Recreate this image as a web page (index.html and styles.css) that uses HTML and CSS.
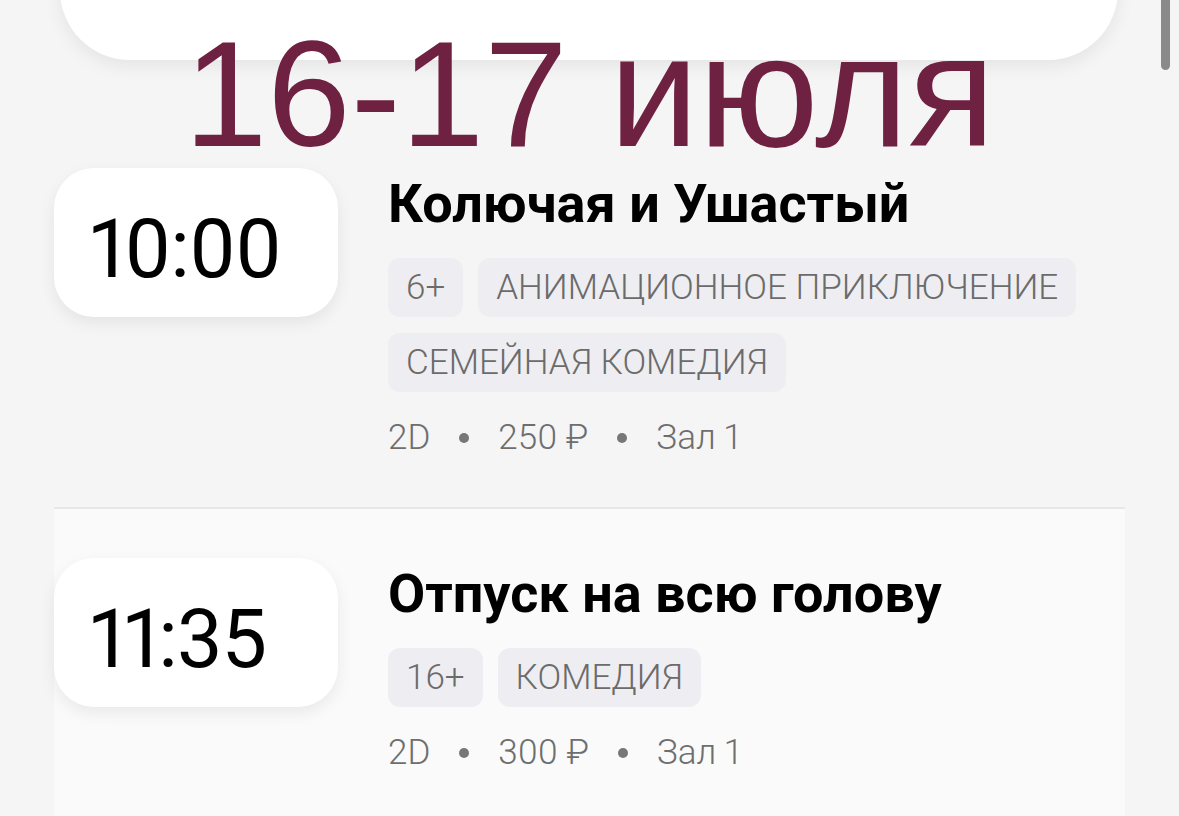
FILE: index.html
```html
<!DOCTYPE html>
<html lang="ru">
<head>
<meta charset="utf-8">
<title>Сеансы</title>
<link rel="stylesheet" href="styles.css">
</head>
<body>
<div class="page">
  <div class="topcard"></div>
  <h1 class="date">16-17 <span class="month">июля</span></h1>
  <div class="sessions">
    <div class="session">
      <div class="time">10:00</div>
      <div class="info">
        <h2 class="title">Колючая и Ушастый</h2>
        <div class="tags">
          <span class="tag">6+</span>
          <span class="tag">АНИМАЦИОННОЕ ПРИКЛЮЧЕНИЕ</span>
          <span class="tag">СЕМЕЙНАЯ КОМЕДИЯ</span>
        </div>
        <div class="meta">
          <span>2D</span><span class="dot"></span><span>250 ₽</span><span class="dot"></span><span>Зал 1</span>
        </div>
      </div>
    </div>
    <div class="session session--alt">
      <div class="time">11:35</div>
      <div class="info">
        <h2 class="title">Отпуск на всю голову</h2>
        <div class="tags">
          <span class="tag">16+</span>
          <span class="tag">КОМЕДИЯ</span>
        </div>
        <div class="meta">
          <span>2D</span><span class="dot"></span><span>300 ₽</span><span class="dot"></span><span>Зал 1</span>
        </div>
      </div>
    </div>
  </div>
</div>
<div class="scrollbar"></div>
</body>
</html>
```
FILE: styles.css
```css
html, body {
  margin: 0;
  padding: 0;
}
body {
  background: #f5f5f5;
  overflow: hidden;
  height: 816px;
  position: relative;
  font-family: Roboto, "Noto Sans", sans-serif;
}
.page {
  padding: 0 54px;
}
.topcard {
  margin: -80px 7px 0 6px;
  height: 140px;
  background: #ffffff;
  border-radius: 70px;
  box-shadow: 0 6px 18px rgba(0, 0, 0, 0.07);
}
.date {
  margin: -40px 0 0;
  text-align: center;
  font-family: "Liberation Sans", Arial, sans-serif;
  font-weight: 400;
  font-size: 150px;
  line-height: 148px;
  color: #6f2141;
}
.month {
  font-size: 160px;
  line-height: 0;
}
.session {
  display: flex;
  align-items: flex-start;
  gap: 50px;
  padding: 0 0 48px;
}
.session--alt {
  border-top: 2px solid #e7e7e7;
  padding-top: 49px;
  background: #fafafa;
}
.time {
  flex: 0 0 auto;
  width: 248px;
  height: 135px;
  padding: 14px 0 0 36px;
  background: #ffffff;
  border-radius: 40px;
  box-shadow: 0 6px 16px rgba(0, 0, 0, 0.07);
  font-size: 81px;
  line-height: 135px;
  font-weight: 400;
  font-variant-numeric: proportional-nums;
  letter-spacing: -1px;
  color: #000;
}
.info {
  flex: 1;
  padding-top: 3px;
}
.title {
  margin: 0;
  font-size: 54px;
  line-height: 65px;
  font-weight: 700;
  color: #000;
}
.tags {
  margin-top: 22px;
  display: flex;
  flex-wrap: wrap;
  gap: 16px 15px;
}
.tag {
  height: 59px;
  line-height: 59px;
  padding: 0 18px;
  font-size: 35px;
  font-weight: 300;
  color: #6b6b6b;
  background: #eeeef2;
  border-radius: 12px;
}
.meta {
  margin-top: 25px;
  display: flex;
  align-items: center;
  gap: 29px;
  font-size: 35px;
  line-height: 42px;
  font-weight: 300;
  color: #6e6e6e;
  font-variant-numeric: proportional-nums;
}
.dot {
  width: 10px;
  height: 10px;
  border-radius: 50%;
  background: #777777;
}
.scrollbar {
  position: absolute;
  top: 0;
  right: 9px;
  width: 9px;
  height: 70px;
  border-radius: 0 0 5px 5px;
  background: #8a8a8a;
}
```
